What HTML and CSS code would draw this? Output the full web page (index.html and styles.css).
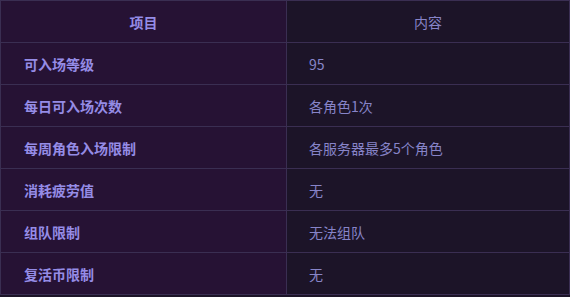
FILE: index.html
```html
<!DOCTYPE html>
<html lang="zh">
<head>
<meta charset="utf-8">
<link rel="stylesheet" href="styles.css">
</head>
<body>
<table class="info">
  <thead>
    <tr><th class="key">项目</th><th class="val">内容</th></tr>
  </thead>
  <tbody>
    <tr><td class="key">可入场等级</td><td class="val">95</td></tr>
    <tr><td class="key">每日可入场次数</td><td class="val">各角色1次</td></tr>
    <tr><td class="key">每周角色入场限制</td><td class="val">各服务器最多5个角色</td></tr>
    <tr><td class="key">消耗疲劳值</td><td class="val">无</td></tr>
    <tr><td class="key">组队限制</td><td class="val">无法组队</td></tr>
    <tr><td class="key">复活币限制</td><td class="val">无</td></tr>
  </tbody>
</table>
</body>
</html>
```
FILE: styles.css
```css
html, body {
  margin: 0;
  padding: 0;
  background: #1c1428;
}
.info {
  width: 570px;
  border-collapse: collapse;
  table-layout: fixed;
  font-family: "Noto Sans CJK SC", "Noto Sans", sans-serif;
  font-size: 14px;
}
.info th, .info td {
  height: 41px;
  padding: 0 0 0 23px;
  border: 1px solid #3a2e52;
  text-align: left;
  vertical-align: middle;
  line-height: 20px;
}
.info th {
  padding: 0;
  text-align: center;
}
.info .key {
  width: 285px;
  background: #261234;
  color: #958ce6;
  font-weight: 700;
}
.info .val {
  background: #1c1428;
  color: #8784c8;
  font-weight: 400;
}
.info td.val {
  padding-left: 22px;
}
```
